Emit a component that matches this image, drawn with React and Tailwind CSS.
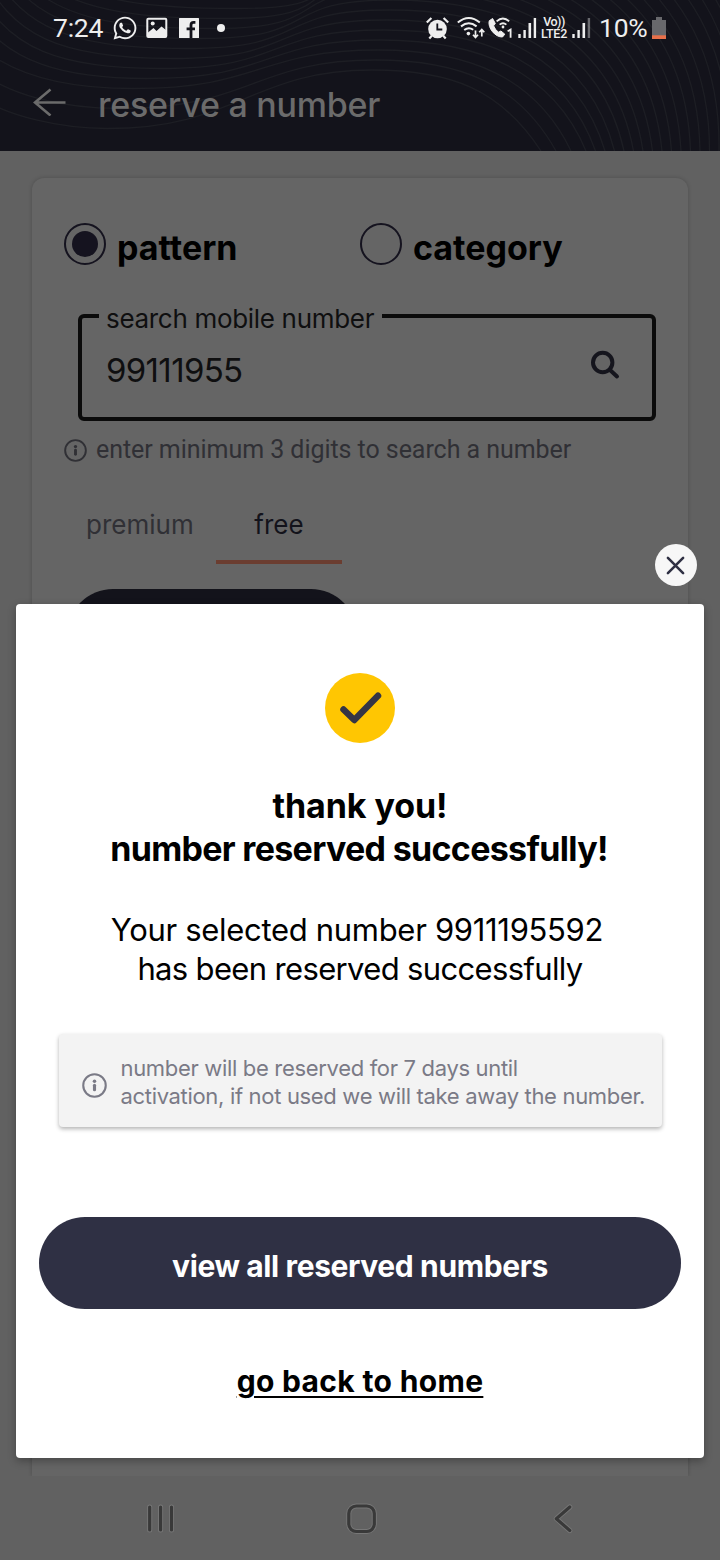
import { FaWhatsapp } from "react-icons/fa";

// contour lines behind the header: dip on the left, crest in the middle, drop on the right
const WAVES = Array.from({ length: 22 }, (_, i) => {
  const tx = 107 + i * 13;
  const ty = 128.5 - (i < 3 ? i * 20 : 40 + (i - 2) * 10);
  const cx = 372 + i * 3;
  const cy = 70 - i * 10;
  const ex = 541 + (i < 4 ? i * 15 : 45 + (i - 3) * 9.5);
  return `M-20 ${98 - i * 26} C10 ${ty - 12 - i * 2} 60 ${ty} ${tx} ${ty} C${tx + 130} ${ty} ${cx - 120} ${cy} ${cx} ${cy} C${cx + 80 + i * 6} ${cy} ${ex - 40 + i * 2.5} ${90 - i * 6} ${ex} 151`;
});

function SignalBars({ weak = false }) {
  return (
    <svg className="h-6 w-[19px]" viewBox="0 0 19 24" fill="#eee">
      <rect x="0.3" y="18" width="2.4" height="4" />
      <rect x="5.4" y="14" width="2.4" height="8" />
      <rect x="10.5" y="7" width="2.6" height="15" />
      <rect x="15.7" y="2" width="2.4" height="20" opacity={weak ? 0.4 : 1} />
    </svg>
  );
}

function StatusBar() {
  return (
    <div className="relative flex h-14 items-center pl-[53px] font-[Roboto,sans-serif] text-[26.5px] text-[#eeeeee]">
      <span className="w-[59px] tracking-[-0.01em]">7:24</span>
      <FaWhatsapp className="size-[26px]" />
      <svg className="ml-[8px] size-[22px]" viewBox="0 0 22 22">
        <rect x="1.3" y="1.8" width="19" height="18.2" rx="1" fill="none" stroke="#eee" strokeWidth="2" />
        <path d="M2 15.5 7.5 11l3 3L15.5 9.5 20 13v7H2z" fill="#eee" />
        <circle cx="6.7" cy="6.5" r="2" fill="#eee" />
      </svg>
      <svg className="ml-[11px] size-[20px]" viewBox="0 0 20 20">
        <rect width="20" height="20" rx="0.5" fill="#eee" />
        <path d="M16.4 4.4h-1.8q-2.6 0-2.6 2.6v13M7.6 10.8h8.4" fill="none" stroke="#13131b" strokeWidth="2.8" />
      </svg>
      <span className="ml-[18px] size-2 rounded-full bg-[#eeeeee]" />

      <svg className="ml-[201px] size-[23px]" viewBox="0 0 23 23">
        <circle cx="11.5" cy="12" r="9.3" fill="#eee" />
        <path d="M.8 5.5 5.4 1M22.2 5.5 17.6 1M3.3 21.5l2.5-2.8M19.7 21.5l-2.5-2.8" stroke="#eee" strokeWidth="2.2" />
        <path d="M11.3 6.5v6h5" fill="none" stroke="#13131b" strokeWidth="1.8" />
      </svg>
      <svg className="ml-[8px] h-[24px] w-[28px]" viewBox="0 0 28 24" fill="none" stroke="#eee" strokeWidth="2">
        <path d="M.8 6.6Q11.8 -2.6 22.8 6.6M4 10.4Q11.8 4.2 19.6 10.4M7.2 14Q11.8 10.6 16.2 13.8" />
        <circle cx="11.4" cy="17.6" r="1.8" fill="#eee" stroke="none" />
        <path d="M18.5 14.5v7M16 18.7l2.5 2.8 2.5-2.8M24.8 20.5v-7M22.3 16.3l2.5-2.8 2.5 2.8" strokeWidth="1.7" />
      </svg>
      <svg className="ml-[3px] h-[24px] w-[25px]" viewBox="0 0 25 24" fill="none" stroke="#eee">
        <path
          d="M4.6 2.5 1.2 4.8C-.6 12 7.5 21.5 14.5 21l2.3-2.8-3.9-3.2-2.5 1.2Q7 13.5 5.6 9.8L7.3 7.5z"
          fill="#eee"
          strokeLinejoin="round"
        />
        <path d="M8.6 5.3q6.2-5.6 12.6 0M11.6 8.7q3.4-3 6.8 0" strokeWidth="1.8" />
        <circle cx="15" cy="11" r="1.4" fill="#eee" stroke="none" />
        <path d="M19.6 15.2 22.6 13.6v8.2" strokeWidth="1.8" />
      </svg>
      <span className="ml-[5px] flex">
        <SignalBars />
      </span>
      <span className="ml-[3px] flex w-[28px] flex-col items-center text-[12.5px] leading-[12px] font-medium">
        <span className="tracking-[-0.04em]">Vo))</span>
        <span className="tracking-[-0.02em]">LTE2</span>
      </span>
      <span className="ml-[4px] flex">
        <SignalBars weak />
      </span>
      <span className="ml-[8px] w-[49px] tracking-[-0.01em]">10%</span>
      <svg className="ml-[4px] h-[22px] w-[14px]" viewBox="0 0 14 22">
        <path d="M4 0h6v3h4v19H0V3h4z" fill="#68686c" />
        <rect y="18.3" width="14" height="3.7" fill="#e8704a" />
      </svg>
    </div>
  );
}

function Header() {
  return (
    <header className="relative h-[151px] overflow-hidden bg-[#13131b]">
      <svg className="absolute inset-0" width="720" height="151" fill="none" stroke="#1d1e24" strokeWidth="1.3">
        {WAVES.map((d) => (
          <path key={d} d={d} />
        ))}
      </svg>
      <StatusBar />
      <div className="relative flex items-start pt-[32px] pl-[33px] text-[#6b6b6b]">
        <svg className="h-[28px] w-[33px]" viewBox="0 0 33 28" fill="none" stroke="currentColor" strokeWidth="2.6">
          <path d="M32.5 14.5H2M17.5 1.5 2 14.5l15.5 13" />
        </svg>
        <h1 className="-mt-[3px] ml-[32px] text-[34px] leading-10 font-medium tracking-[-0.007em]">
          reserve a number
        </h1>
      </div>
    </header>
  );
}

function InfoIcon({ className }) {
  return (
    <svg className={className} viewBox="0 0 24 24" fill="none" stroke="currentColor">
      <circle cx="12" cy="12" r="10.8" strokeWidth="2" />
      <circle cx="12" cy="7.9" r="1.7" fill="currentColor" stroke="none" />
      <path d="M12 11.7v4.3" strokeWidth="3" strokeLinecap="round" />
    </svg>
  );
}

function Radio({ label, checked }) {
  return (
    <label className="flex w-[296px]">
      <span className="flex size-[42px] items-center justify-center rounded-full border-2 border-[#15131f]">
        {checked && <span className="size-[26px] rounded-full bg-[#15131f]" />}
      </span>
      <span className="ml-[11px] h-[42px] pt-[5px] text-[34px] leading-10 font-bold text-black">
        {label}
      </span>
    </label>
  );
}

function SearchCard() {
  return (
    <section className="mx-8 h-[1298px] rounded-t-xl bg-[#656565] pt-[45px] pl-8 shadow-[0_0_4px_rgba(0,0,0,0.2)]">
      <div className="flex h-[42px]">
        <Radio label="pattern" checked />
        <Radio label="category" />
      </div>

      <fieldset className="mt-[34px] ml-[14px] h-[122px] w-[578px] rounded-md border-4 border-[#0b0b0b] text-[#0f0f10]">
        <legend className="ml-[17px] w-[283px] pt-[5px] pl-[7px] text-[26px] leading-[29px] tracking-[-0.012em] whitespace-nowrap">
          search mobile number
        </legend>
        <div className="flex items-center justify-between pt-[17px] pr-[32px] pl-[24px]">
          <span className="text-[33px] leading-10 tracking-[-0.02em]">99111955</span>
          <svg className="-mt-[10px] size-[30px]" viewBox="0 0 30 30" fill="none" stroke="#15151d" strokeWidth="4">
            <circle cx="12.7" cy="12.5" r="9.7" />
            <path d="m20 20 7 6.5" strokeLinecap="round" />
          </svg>
        </div>
      </fieldset>

      <div className="mt-[14px] flex items-center text-[#303035]">
        <InfoIcon className="size-[23px]" />
        <p className="ml-[9px] font-[Roboto,sans-serif] text-[25px] leading-[30px] tracking-[-0.002em]">
          enter minimum 3 digits to search a number
        </p>
      </div>

      <div className="mt-[42px] flex text-[26px] leading-8">
        <div className="w-[152px] pt-[2px] pl-[22px] text-[#303035]">premium</div>
        <div className="h-[57px] w-[126px] border-b-4 border-[#6b3d30] pt-[2px] text-center text-[#13131b]">
          free
        </div>
      </div>
      <div className="mt-[25px] ml-[3px] h-[92px] w-[290px] rounded-full bg-[#13131b]" />
    </section>
  );
}

function NavBar() {
  return (
    <nav className="relative h-[84px] bg-[#616161]">
      <svg width="720" height="84" fill="none">
        {[
          ["#777777", 5],
          ["#393939", 3.2],
        ].map(([color, width]) => (
          <g key={color} stroke={color} strokeWidth={width} strokeLinecap="round" strokeLinejoin="round">
            <path d="M149.7 31v23M160.6 31v23M171.5 31v23" />
            <rect x="348.8" y="30" width="25.5" height="25.5" rx="7.5" />
            <path d="m569.8 31-13.5 11.7 13.5 11.8" />
          </g>
        ))}
      </svg>
    </nav>
  );
}

function SuccessDialog() {
  return (
    <div
      role="dialog"
      className="absolute top-[604px] left-4 flex h-[854px] w-[688px] flex-col items-center rounded bg-white text-black shadow-[0_3px_8px_rgba(0,0,0,0.3)]"
    >
      <button className="absolute -top-[60px] right-[7px] flex size-[42px] items-center justify-center rounded-full bg-[#f7f7f7]">
        <svg className="mt-px mr-px" width="19" height="19" viewBox="0 0 20 20" stroke="#2f3043" strokeWidth="2.7" strokeLinecap="round">
          <path d="m2 2 16 16M18 2 2 18" />
        </svg>
      </button>

      <svg className="mt-[69px] size-[70px] shrink-0" viewBox="0 0 70 70" fill="none">
        <circle cx="35" cy="35" r="35" fill="#ffc602" />
        <path d="M18.5 36.5 29.3 47 53 22.8" stroke="#353545" strokeWidth="6.5" strokeLinecap="round" strokeLinejoin="round" />
      </svg>

      <h2 className="mt-[41px] text-center text-[34px] leading-[43px] font-bold tracking-[-0.02em] whitespace-nowrap">
        <span className="tracking-[-0.002em]">thank you!</span>
        <br />
        <span className="mr-[2px]">number reserved successfully!</span>
      </h2>

      <p className="mt-[40px] text-center text-[31px] leading-[39px] tracking-[-0.01em] whitespace-nowrap">
        <span className="mr-[6px]">Your selected number 9911195592</span>
        <br />
        <span className="tracking-[-0.021em]">has been reserved successfully</span>
      </p>

      <div className="mt-[46px] flex h-[93px] w-[603px] items-center rounded bg-[#f3f3f3] pl-[23px] text-[#7a7a86] shadow-[0_2px_4px_rgba(0,0,0,0.3)]">
        <InfoIcon className="mt-[9px] size-[25px] shrink-0" />
        <p className="ml-[14px] pt-[2px] text-[22px] leading-7 tracking-[-0.0147em] whitespace-nowrap">
          number will be reserved for 7 days until
          <br />
          activation, if not used we will take away the number.
        </p>
      </div>

      <button className="mt-[90px] h-[92px] w-[642px] rounded-full bg-[#2f3044] pt-[6px] text-[30px] font-bold tracking-[-0.013em] text-white">
        view all reserved numbers
      </button>
      <a className="mt-[53px] text-[30px] leading-[38px] font-bold tracking-[0.011em] underline decoration-2 underline-offset-[4px]">
        go back to home
      </a>
    </div>
  );
}

export default function App() {
  return (
    <main className="relative h-[1560px] w-[720px] overflow-hidden bg-[#616161] font-[Inter,'Liberation_Sans',sans-serif]">
      <Header />
      <div className="h-[1325px] overflow-hidden pt-[27px]">
        <SearchCard />
      </div>
      <NavBar />
      <SuccessDialog />
    </main>
  );
}
